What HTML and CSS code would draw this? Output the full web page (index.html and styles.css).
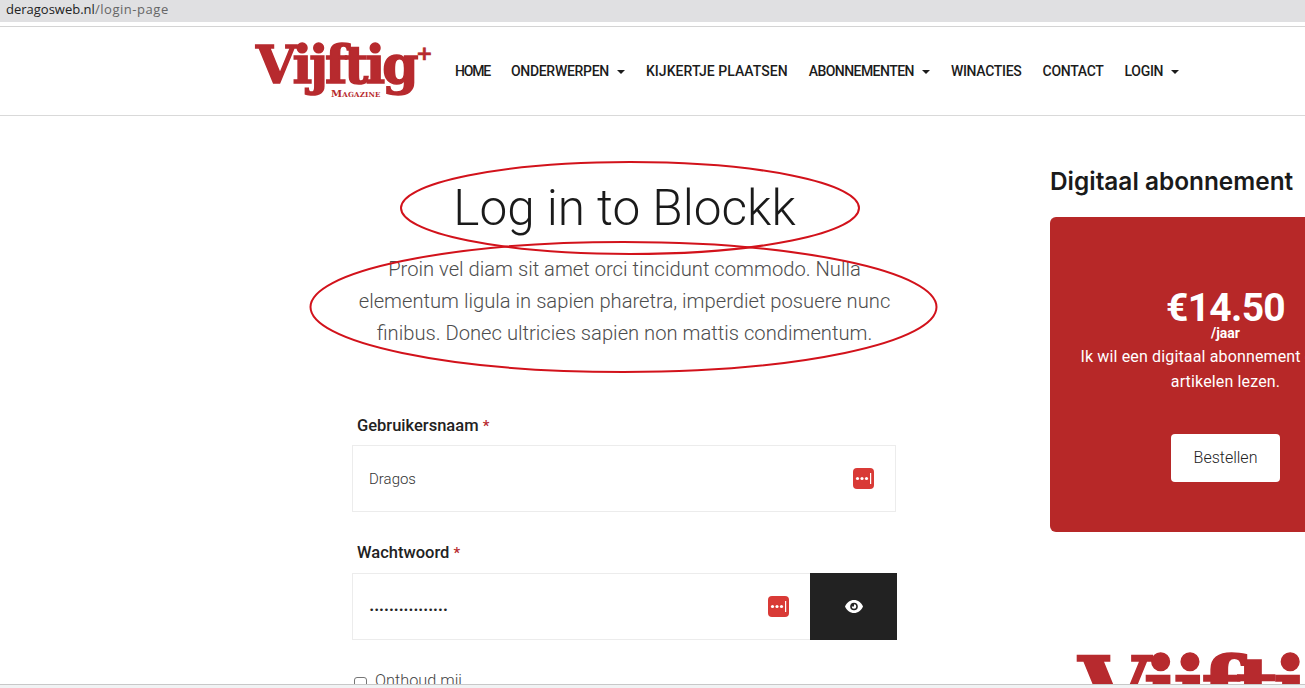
FILE: index.html
```html
<!DOCTYPE html>
<html lang="nl">
  <head>
    <meta charset="UTF-8" />
    <title>Vijftig+ Magazine – Login</title>
    <link rel="stylesheet" href="styles.css">
  </head>
  <body>
    <!-- adresbalk -->
    <div class="address-bar">deragosweb.nl<span class="address-path">/login-page</span></div>

    <!-- navigatie -->
    <header class="site-header">
      <a class="logo">
        <span class="logo-word">Vijftig</span>
        <span class="logo-plus">+</span>
        <span class="logo-sub">Magazine</span>
      </a>
      <nav class="main-nav">
        <a class="nav-home">Home</a>
        <a class="has-caret">Onderwerpen</a>
        <a class="nav-wide">Kijkertje plaatsen</a>
        <a class="has-caret nav-tight">Abonnementen</a>
        <a>Winacties</a>
        <a>Contact</a>
        <a class="has-caret">Login</a>
      </nav>
    </header>

    <main class="page">
      <!-- rode cirkels uit de annotatie -->
      <svg class="marks" width="1305" height="572" viewBox="0 116 1305 572" fill="none" stroke="#d2121b" stroke-width="2">
        <ellipse cx="630" cy="208" rx="229" ry="46" />
        <ellipse cx="623.5" cy="307" rx="313" ry="65" />
      </svg>

      <section class="login">
        <h1>Log in to Blockk</h1>
        <p class="intro">Proin vel diam sit amet orci tincidunt commodo. Nulla elementum ligula in sapien pharetra, imperdiet posuere nunc finibus. Donec ultricies sapien non mattis condimentum.</p>

        <label class="field-label">Gebruikersnaam <span class="req">*</span></label>
        <div class="field field-user">
          <span class="field-value">Dragos</span>
          <svg class="lp-icon" width="21" height="21" viewBox="0 0 21 21"><rect width="21" height="21" rx="4" fill="#d93a36" /><circle cx="4.5" cy="10.5" r="1.6" fill="#fff" /><circle cx="9" cy="10.5" r="1.6" fill="#fff" /><circle cx="13.5" cy="10.5" r="1.6" fill="#fff" /><rect x="17" y="5" width="1.2" height="11" fill="#fff" /></svg>
        </div>

        <label class="field-label">Wachtwoord <span class="req">*</span></label>
        <div class="password-row">
          <div class="field">
            <span class="field-dots">••••••••••••••••</span>
            <svg class="lp-icon" width="21" height="21" viewBox="0 0 21 21"><rect width="21" height="21" rx="4" fill="#d93a36" /><circle cx="4.5" cy="10.5" r="1.6" fill="#fff" /><circle cx="9" cy="10.5" r="1.6" fill="#fff" /><circle cx="13.5" cy="10.5" r="1.6" fill="#fff" /><rect x="17" y="5" width="1.2" height="11" fill="#fff" /></svg>
          </div>
          <button class="eye-btn" aria-label="Toon wachtwoord">
            <svg width="18" height="13" viewBox="0 0 18 13"><path d="M9 0C5 0 1.8 2.6 0 6.5 1.8 10.4 5 13 9 13s7.2-2.6 9-6.5C16.2 2.6 13 0 9 0z" fill="#fff" /><circle cx="9" cy="6.5" r="3.8" fill="#222" /><path d="M9 4.2a2.3 2.3 0 1 1-2.3 2.3H9z" fill="#fff" /></svg>
          </button>
        </div>

        <label class="remember"><span class="check"></span>Onthoud mij</label>
      </section>

      <aside class="sidebar">
        <h2>Digitaal abonnement</h2>
        <div class="price-card">
          <div class="price">€14.50</div>
          <div class="per">/jaar</div>
          <p>Ik wil een digitaal abonnement en online<br>artikelen lezen.</p>
          <a class="order-btn">Bestellen</a>
        </div>
        <div class="side-logo">Vijftig</div>
      </aside>
    </main>

    <div class="window-edge"></div>
  </body>
</html>
```

FILE: styles.css
```css
* {
  box-sizing: border-box;
  margin: 0;
  padding: 0;
}

html,
body {
  height: 688px;
  overflow: hidden;
  background: #fff;
  font-family: Roboto, "Liberation Sans", sans-serif;
  color: #1c1c1c;
}

body {
  display: flex;
  flex-direction: column;
}

/* adresbalk */
.address-bar {
  height: 27px;
  padding: 1px 0 0 6px;
  background: #e0e0e2;
  border-bottom: 1px solid #d4d4d4;
  box-shadow: inset 0 -4px 0 #fff;
  font-family: "Open Sans", sans-serif;
  font-size: 13px;
  line-height: 16px;
  color: #222;
}

.address-path {
  color: #666;
  letter-spacing: 0.55px;
}

/* navigatie */
.site-header {
  flex: none;
  height: 89px;
  display: flex;
  align-items: center;
  padding-left: 256px;
  border-bottom: 1px solid #d9d9d9;
}

.logo {
  position: relative;
  display: block;
  width: 177px;
  height: 60px;
  color: #b72a2e;
  font-family: "DejaVu Serif", serif;
  font-weight: 700;
}

.logo-word {
  position: absolute;
  left: 0;
  top: -6px;
  font-size: 52px;
  line-height: 60px;
  letter-spacing: -3px;
  white-space: nowrap;
  -webkit-text-stroke: 1.5px #b72a2e;
}

.logo-plus {
  position: absolute;
  left: 160px;
  top: 2px;
  font-family: "DejaVu Sans", sans-serif;
  font-size: 20px;
  line-height: 20px;
  -webkit-text-stroke: 0.6px #b72a2e;
}

.logo-sub {
  position: absolute;
  left: 75px;
  top: 47px;
  font-size: 10px;
  line-height: 11px;
  font-variant: small-caps;
  letter-spacing: 0.2px;
}

.main-nav {
  display: flex;
  align-items: center;
  gap: 21px;
  margin-left: 22px;
}

.main-nav a {
  font-size: 14px;
  font-weight: 500;
  letter-spacing: -0.3px;
  text-transform: uppercase;
  white-space: nowrap;
}

.main-nav .nav-home {
  letter-spacing: -1.2px;
}

.main-nav .nav-wide {
  letter-spacing: 0.05px;
}

.main-nav .nav-tight {
  letter-spacing: -0.55px;
}

.main-nav .has-caret::after {
  content: "";
  display: inline-block;
  margin-left: 8px;
  vertical-align: 2px;
  border-top: 4px solid #1c1c1c;
  border-left: 4px solid transparent;
  border-right: 4px solid transparent;
}

/* pagina */
.page {
  position: relative;
  flex: 1;
  min-height: 0;
  display: flex;
  align-items: flex-start;
  padding-left: 352px;
  overflow: hidden;
}

.marks {
  position: absolute;
  left: 0;
  top: 0;
  pointer-events: none;
}

.login {
  flex: none;
  width: 545px;
}

.login h1 {
  margin-top: 59px;
  font-size: 49.5px;
  font-weight: 300;
  line-height: 66px;
  text-align: center;
  color: #1a1a1a;
}

.intro {
  margin-top: 12px;
  font-size: 20.2px;
  font-weight: 300;
  line-height: 32px;
  text-align: center;
  color: #4d4d4d;
}

.field-label {
  display: block;
  margin: 65px 0 0 5px;
  font-size: 16.5px;
  font-weight: 500;
  line-height: 24px;
  color: #222;
}

.field-label:nth-of-type(2) {
  margin-top: 29px;
}

.req {
  color: #b72a2e;
  font-size: 15px;
}

.field {
  height: 67px;
  display: flex;
  align-items: center;
  justify-content: space-between;
  padding: 0 21px 0 16px;
  border: 1px solid #ececec;
  background: #fff;
}

.field-user {
  width: 544px;
  margin-top: 7px;
}

.field-value {
  font-size: 15px;
  font-weight: 300;
  color: #333;
}

.field-dots {
  margin-top: 6px;
  font-family: "DejaVu Sans", sans-serif;
  font-size: 9px;
  letter-spacing: -0.4px;
  color: #222;
}

.password-row {
  display: flex;
  width: 545px;
  margin-top: 8px;
}

.password-row .field {
  flex: 1;
  border-right: none;
}

.eye-btn {
  flex: none;
  width: 87px;
  height: 67px;
  display: flex;
  align-items: center;
  justify-content: center;
  border: none;
  background: #222;
}

.remember {
  display: flex;
  align-items: center;
  margin: 31px 0 0 2px;
  font-size: 16.3px;
  font-weight: 300;
  line-height: 20px;
  color: #444;
}

.check {
  width: 13px;
  height: 13px;
  margin: 4px 8px 0 0;
  border: 1px solid #767676;
  border-radius: 3px;
}

/* zijbalk */
.sidebar {
  flex: none;
  width: 351px;
  margin-left: 153px;
}

.sidebar h2 {
  margin-top: 49px;
  font-family: Inter, sans-serif;
  font-size: 24.4px;
  font-weight: 600;
  line-height: 32px;
  white-space: nowrap;
  color: #1a1a1a;
}

.price-card {
  height: 315px;
  margin-top: 20px;
  padding-top: 73px;
  border-radius: 6px;
  background: #b72828;
  color: #fff;
  text-align: center;
}

.price {
  font-size: 39px;
  font-weight: 700;
  line-height: 36px;
  letter-spacing: -0.7px;
}

.per {
  font-size: 14px;
  font-weight: 700;
  line-height: 14px;
}

.price-card p {
  margin-top: 4px;
  font-size: 16px;
  font-weight: 400;
  line-height: 25px;
  letter-spacing: 0.15px;
  white-space: nowrap;
}

.order-btn {
  display: block;
  width: 109px;
  height: 48px;
  margin: 40px auto 0;
  border-radius: 4px;
  background: #fff;
  color: #222;
  font-size: 16px;
  font-weight: 300;
  line-height: 48px;
}

.side-logo {
  margin: 109px 0 0 28px;
  color: #b72a2e;
  font-family: "DejaVu Serif", serif;
  font-size: 94px;
  font-weight: 700;
  line-height: 100px;
  letter-spacing: -6px;
  white-space: nowrap;
  -webkit-text-stroke: 1.5px #b72a2e;
}

.window-edge {
  position: absolute;
  left: 0;
  right: 0;
  top: 684px;
  height: 4px;
  background: #f1f3f4;
  border-top: 1px solid #c8c8c8;
}
```
